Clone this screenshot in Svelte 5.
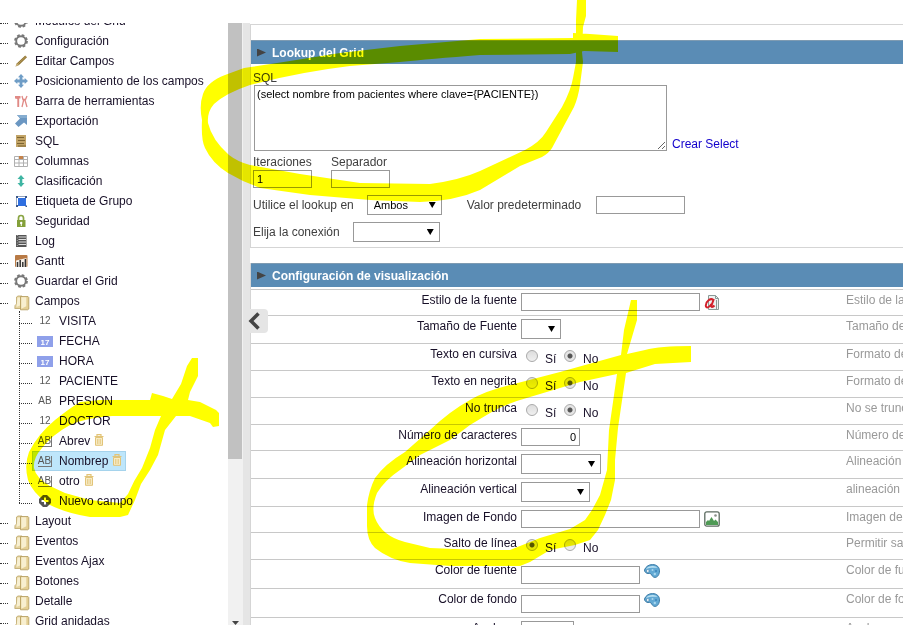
<script>
  const tools = [
    ['Módulos del Grid', 'gear'],
    ['Configuración', 'gear'],
    ['Editar Campos', 'pencil'],
    ['Posicionamiento de los campos', 'move'],
    ['Barra de herramientas', 'tools'],
    ['Exportación', 'export'],
    ['SQL', 'scroll'],
    ['Columnas', 'columns'],
    ['Clasificación', 'sort'],
    ['Etiqueta de Grupo', 'group'],
    ['Seguridad', 'lock'],
    ['Log', 'log'],
    ['Gantt', 'gantt'],
    ['Guardar el Grid', 'gear'],
  ];

  const fields = [
    { name: 'VISITA', kind: 'num' },
    { name: 'FECHA', kind: 'date' },
    { name: 'HORA', kind: 'date' },
    { name: 'PACIENTE', kind: 'num' },
    { name: 'PRESION', kind: 'text' },
    { name: 'DOCTOR', kind: 'num' },
    { name: 'Abrev', kind: 'virtual' },
    { name: 'Nombrep', kind: 'virtual', selected: true },
    { name: 'otro', kind: 'virtual' },
    { name: 'Nuevo campo', kind: 'add' },
  ];

  const folders = ['Layout', 'Eventos', 'Eventos Ajax', 'Botones', 'Detalle', 'Grid anidadas'];

  const settings = [
    { id: 'estilo', label: 'Estilo de la fuente', type: 'text', size: 'wide', icon: 'font', help: 'Estilo de la fuente' },
    { id: 'tamano', label: 'Tamaño de Fuente', type: 'select', size: 's40', help: 'Tamaño de la fuente' },
    { id: 'cursiva', label: 'Texto en cursiva', type: 'radio', value: 'no', help: 'Formato del texto' },
    { id: 'negrita', label: 'Texto en negrita', type: 'radio', value: 'no', help: 'Formato del texto' },
    { id: 'trunca', label: 'No trunca', type: 'radio', value: 'no', help: 'No se trunca el texto' },
    { id: 'caracteres', label: 'Número de caracteres', type: 'text', size: 'number', value: '0', help: 'Número de caracteres' },
    { id: 'horizontal', label: 'Alineación horizontal', type: 'select', size: 's80', help: 'Alineación horizontal' },
    { id: 'vertical', label: 'Alineación vertical', type: 'select', size: 's69', help: 'alineación vertical' },
    { id: 'imagen', label: 'Imagen de Fondo', type: 'text', size: 'wide', icon: 'image', help: 'Imagen de fondo' },
    { id: 'salto', label: 'Salto de línea', type: 'radio', value: 'si', help: 'Permitir salto de línea' },
    { id: 'cfuente', label: 'Color de fuente', type: 'text', size: 'color', icon: 'palette', help: 'Color de fuente' },
    { id: 'cfondo', label: 'Color de fondo', type: 'text', size: 'color', icon: 'palette', help: 'Color de fondo' },
    { id: 'anchura', label: 'Anchura', type: 'text', size: 'short', help: 'Anchura' },
  ];
</script>

{#snippet icon(kind)}
  <svg class="icon" viewBox="0 0 14 14" width="14" height="14" aria-hidden="true">
    {#if kind === 'gear'}
      <circle cx="7" cy="7" r="6" fill="none" stroke="#777" stroke-width="1.800" stroke-dasharray="2.700 2.010" />
      <circle cx="7" cy="7" r="4.800" fill="none" stroke="#777" stroke-width="1.900" />
    {:else if kind === 'pencil'}
      <path d="M1.500 12.500L3 9.200 11.200 1.500l1.800 1.800L5 11z" fill="#8f7433" />
      <path d="M4 10l8-7.500" stroke="#b99c58" stroke-width="1" />
      <path d="M1.500 12.500L3 9.200 5 11z" fill="#c9b27c" />
    {:else if kind === 'move'}
      <path d="M7 0l3 3.300H8.400v2.300h2.300V4L14 7l-3.300 3V8.400H8.400v2.300H10L7 14l-3-3.300h1.600V8.400H3.300V10L0 7l3.300-3v1.600h2.300V3.300H4z" fill="#6f9dc6" />
    {:else if kind === 'tools'}
      <path d="M1 2h5.500v2.500H5.200V13H3.300V5L1 4.500z" fill="#e08a86" />
      <path d="M8 2l1 3.500h2.500L13 2M9.800 5.500L8 13M10.800 5.500L13 13" fill="none" stroke="#e08a86" stroke-width="1.300" />
    {:else if kind === 'export'}
      <path d="M3 1h10v10l-3-2.500L4.500 13 1 9.500 6 4.500z" fill="#6b97c2" />
      <path d="M3 1h10v3H6z" fill="#86add0" />
    {:else if kind === 'scroll'}
      <path d="M2 1h10v12H2z" fill="#c2a467" />
      <path d="M3 3.500h7M4 6.500h7M3 9.500h7M4 12h8" stroke="#7d6430" stroke-width="1" />
    {:else if kind === 'columns'}
      <path d="M.5 2.500h13v10H.5zM.5 5.500h13M.5 9h13M5 2.500v10M9.500 2.500v10" fill="#fff" stroke="#b0b0b0" />
      <path d="M5 2h4v3H5z" fill="#c5824a" />
    {:else if kind === 'sort'}
      <path d="M7 1l3.500 4H8.300v4h2.200L7 13 3.500 9h2.200V5H3.500z" fill="#3fb5a3" />
    {:else if kind === 'group'}
      <path d="M2.500 2.500h9v9h-9z" fill="#fff" stroke="#93a3bd" />
      <path d="M4 4h8v8H4z" fill="#2f6fe0" />
      <path d="M2 11h2v2H2zM11.500 11.500h1.500v1.500h-1.500zM11 2h2v2h-2zM2 2h2v2H2z" fill="#3c5788" />
    {:else if kind === 'lock'}
      <path d="M4.500 6.500V4a2.500 2.500 0 015 0v2.500" fill="none" stroke="#8aa544" stroke-width="1.700" />
      <path d="M3 6h8.500v7H3z" fill="#84a03a" />
      <circle cx="7.200" cy="9" r="1.200" fill="#fff" />
      <path d="M6.800 9h1v3h-1z" fill="#fff" />
    {:else if kind === 'log'}
      <path d="M2 1h10.500v12H2z" fill="#555" />
      <path d="M4.500 3H12M4.500 5.500H12M4.500 8H12M4.500 10.500H12" stroke="#ddd" stroke-width="1.200" />
      <path d="M3.300 1v12" stroke="#aaa" stroke-dasharray="1 1.500" />
    {:else if kind === 'gantt'}
      <rect x="1" y="1" width="12.500" height="12" rx="1" fill="#b87a45" />
      <path d="M2 6.500l10.500-2.500V13H2z" fill="#f5efe8" />
      <path d="M3.500 8v5M6.200 6v7M8.800 8v5M11.400 5v8" stroke="#333" stroke-width="1.500" />
    {/if}
  </svg>
{/snippet}

{#snippet folder()}
  <svg class="icon folder" viewBox="0 0 16 16" width="16" height="16" aria-hidden="true">
    <path d="M2.500 2L4 1h4v12.500H.8l.2-3 1.500-1.500z" fill="#e6d4a0" stroke="#bda66a" stroke-width=".8" />
    <path d="M3.500 2.500h2.500v8L2.500 12z" fill="#f8f0d2" />
    <path d="M6.500 1.500h7.500l.8 1v11.500l-1 .8H6.500z" fill="#e4cf94" stroke="#b39a5c" stroke-width=".8" />
    <path d="M7.300 2.300h5v9l-5 2.500z" fill="#f8efd0" />
  </svg>
{/snippet}

{#snippet trash()}
  <svg class="trash" viewBox="0 0 10 12" width="10" height="12" aria-hidden="true">
    <path d="M.5 2.500h9M3 2V.7h4V2" stroke="#e2c478" stroke-width="1.200" fill="none" />
    <path d="M1.500 3.500h7v7.800h-7z" fill="#f7ebc5" stroke="#e2c478" />
    <path d="M3.800 5v5M6.200 5v5" stroke="#e2c478" />
  </svg>
{/snippet}

{#snippet side(kind)}
  {#if kind === 'font'}
    <svg viewBox="0 0 16 16" width="16" height="16" aria-hidden="true">
      <path d="M4.500 1.500h7l3 3v11h-10z" fill="#eef1f1" stroke="#8a9a96" />
      <path d="M11.500 1.500v3h3M12.500 6v9" stroke="#8a9a96" fill="none" />
      <path d="M9 5.500C6.500 4.200 2 7 1.800 11.500c0 3 3.200 2.500 5.700-1.500M9.800 5L7.500 11.500c-.5 1.800 1 2 3 0" fill="none" stroke="#d2202a" stroke-width="2" />
    </svg>
  {:else if kind === 'image'}
    <svg viewBox="0 0 16 16" width="16" height="16" aria-hidden="true">
      <rect x=".8" y=".8" width="14.400" height="14.400" rx="2" fill="#fff" stroke="#5c6b60" stroke-width="1.300" />
      <path d="M2 14v-3l2-2 1 1 2.500-4L10 10l1.500-1.500L14 11v3z" fill="#4f9a55" />
      <circle cx="11.500" cy="4.500" r="1.300" fill="#8a8f8a" />
    </svg>
  {:else}
    <svg viewBox="0 0 16 14" width="16" height="14" aria-hidden="true">
      <path d="M.5 6C1.500 3 4.500.5 8.500.6c4.500 0 7 2.700 7 6.200 0 3.800-2 6.600-4.500 6.600-2.300 0-3-2-4-3.400-1-1-1.500-.5-3-.5S.3 8 .5 6z" fill="#62a9d4" stroke="#3c7ba6" />
      <path d="M2 5C3 3 6 1.700 9 1.900c2 .1 3.500.8 4.300 2C10 3.500 5 3.500 2 5z" fill="#b9e0f2" />
      <circle cx="3.800" cy="7" r="1.400" fill="#fff" stroke="#3c7ba6" stroke-width=".6" />
      <circle cx="8.500" cy="6" r="1" fill="#a8d6ee" /><circle cx="12" cy="7" r="1" fill="#3d83b8" /><circle cx="10.800" cy="10" r="1.200" fill="#a8d6ee" />
    </svg>
  {/if}
{/snippet}

<div class="page">
  <nav class="sidebar" aria-label="Grid">
    <ul class="tree">
      {#each tools as [name, kind]}
        <li><a href="#tree"><span class="slot">{@render icon(kind)}</span>{name}</a></li>
      {/each}
      <li><a href="#tree"><span class="slot">{@render folder()}</span>Campos</a></li>
      <li class="branch">
        <ul>
          {#each fields as f}
            <li>
              <a href="#tree" class:selected={f.selected}>
                <span class="type">
                  {#if f.kind === 'num'}12
                  {:else if f.kind === 'date'}<span class="cal">17</span>
                  {:else if f.kind === 'text'}AB
                  {:else if f.kind === 'virtual'}<span class="virtual">AB</span>
                  {:else}
                    <svg viewBox="0 0 12 12" width="12" height="12" aria-hidden="true">
                      <path d="M4 0h4l4 4v4l-4 4H4L0 8V4z" fill="#555" />
                      <path d="M6 2.500v7M2.500 6h7" stroke="#fff" stroke-width="2" />
                    </svg>
                  {/if}
                </span>{f.name}{#if f.kind === 'virtual'}{@render trash()}{/if}
              </a>
            </li>
          {/each}
        </ul>
      </li>
      {#each folders as name}
        <li><a href="#tree"><span class="slot">{@render folder()}</span>{name}</a></li>
      {/each}
    </ul>
  </nav>
  <div class="scrollbar"><div class="thumb"></div><i></i></div>
  <div class="splitter">
    <button class="collapse" aria-label="Ocultar menú">
      <svg viewBox="0 0 12 18" width="12" height="18"><path d="M10.500 1.500L3 9l7.500 7.500" fill="none" stroke="#444" stroke-width="3.500" /></svg>
    </button>
  </div>

  <main>
    <section class="lookup">
      <h2>Lookup del Grid</h2>
      <div class="body">
        <label for="sql">SQL</label>
        <div class="line sql">
          <textarea id="sql" value={'(select nombre from pacientes where clave={PACIENTE})'}></textarea>
          <a href="#select">Crear Select</a>
        </div>
        <div class="line pair">
          <div><label for="iter">Iteraciones</label><input id="iter" value="1" /></div>
          <div><label for="sep">Separador</label><input id="sep" /></div>
        </div>
        <div class="line">
          <label for="use">Utilice el lookup en</label>
          <span class="select s75"><select id="use"><option>Ambos</option></select></span>
          <label for="def" class="default">Valor predeterminado</label>
          <input id="def" class="defval" />
        </div>
        <div class="line">
          <label for="con">Elija la conexión</label>
          <span class="select s87"><select id="con"><option></option></select></span>
        </div>
      </div>
    </section>

    <section class="display">
      <h2>Configuración de visualización</h2>
      <div class="rows">
        {#each settings as s}
          <div class="row">
            {#if s.type === 'radio'}
              <span class="name" id="{s.id}-l">{s.label}</span>
              <div class="control radios" role="radiogroup" aria-labelledby="{s.id}-l">
                <input type="radio" name={s.id} id="{s.id}-s" checked={s.value === 'si'} /><label for="{s.id}-s">Sí</label>
                <input type="radio" name={s.id} id="{s.id}-n" checked={s.value === 'no'} /><label for="{s.id}-n">No</label>
              </div>
            {:else}
              <label class="name" for={s.id}>{s.label}</label>
              <div class="control {s.size}">
                {#if s.type === 'select'}
                  <span class="select {s.size}"><select id={s.id}><option></option></select></span>
                {:else}
                  <input id={s.id} value={s.value ?? ''} />
                {/if}
                {#if s.icon}<button class="pick" aria-label="Elegir">{@render side(s.icon)}</button>{/if}
              </div>
            {/if}
            <span class="help">{s.help}</span>
          </div>
        {/each}
      </div>
    </section>
  </main>

  <svg class="marker" width="903" height="625" viewBox="0 0 903 625" aria-hidden="true">
    <path d="M618 36V52L584 51 570 54 480 55Q430 59 400 62L350 66Q300 72 250 85 226 93 214 104 207 112 208 123 212 140 229 155 238 162 250 165L300 174 360 183 430 184Q460 180 480 171L525 150Q540 142 546 132L562 107Q571 90 573 78L576 62V20L577 0H586V16L583 27 582 52 583 62 580 85Q578 98 574 107L552 148Q549 153 542 157L520 166 480 190Q455 201 420 202L370 200 310 195 260 188 243 181 228 173Q212 163 205 148 201 140 202 120 199 105 203 94 207 82 225 75L244 68 290 61 340 53 400 46 480 39 573 38V33L590 34Z" />
    <path fill-rule="evenodd" d="M198 358V376L190 392 188 400 200 402 216 410 219 413V426L213 427 210 423 190 416H176L165 430 158 455 150 470 141 484 135 500 128 515 120 517H90Q65 513 48 504 32 492 28 480 24 465 29 452 38 434 55 420 70 408 80 402L100 400H150L152 393 163 396 172 399 181 384 187 366 192 358ZM161 416H112Q85 418 70 425 52 435 42 448 33 458 34 468 36 478 50 486L65 493 90 500 120 503 128 494Q134 480 142 468L150 448 155 430Z" />
    <path fill-rule="evenodd" d="M631 300H637V320L627 354 645 350Q660 346 691 346V362L655 364 626 373 618 428 615 460V480L611 500 605 515 598 530 590 540 575 545 550 550 530 562 520 566H450L410 563Q390 560 375 548 367 540 367 526V505Q369 490 375 478 385 464 405 452L430 430Q450 411 470 400 485 391 510 385L560 372 621 355 624 330ZM617 374L580 382 530 397Q505 404 490 413L470 425 450 440 420 455 400 470Q385 480 377 493 371 508 375 518 382 536 405 542L430 548 480 550H510L540 538 570 529 585 520 592 510 600 495 607 470 609 430Z" />
  </svg>
</div>

<style>
  :global(body) {
    margin: 0;
    background: #fff;
  }
  .page {
    position: relative;
    isolation: isolate;
    display: flex;
    box-sizing: border-box;
    height: 100vh;
    padding-top: 23px;
    overflow: hidden;
    background: #fff;
    font: 12px/14px "Liberation Sans", Arial, sans-serif;
    color: #181028;
  }
  .marker {
    position: absolute;
    inset: 0 auto auto 0;
    pointer-events: none;
    mix-blend-mode: multiply;
    fill: #ff0;
  }

  .sidebar {
    flex: 0 0 228px;
    overflow: hidden;
  }
  ul {
    list-style: none;
    margin: 0;
    padding: 0;
  }
  .tree {
    margin-top: -12px;
  }
  .tree li {
    display: flex;
    white-space: nowrap;
  }
  .tree li:not(.branch)::before {
    content: '';
    width: 8px;
    height: 12px;
    border-bottom: 1px dotted #333;
  }
  .tree a {
    display: flex;
    align-items: center;
    height: 20px;
    color: inherit;
    text-decoration: none;
  }
  .slot {
    display: flex;
    justify-content: center;
    width: 26px;
    margin-right: 1px;
  }
  .folder {
    margin: 3px 0 0 2px;
  }
  .tree .branch {
    position: relative;
    padding-left: 19px;
  }
  .branch::after {
    content: '';
    position: absolute;
    left: 19px;
    top: 0;
    bottom: 8px;
    border-left: 1px dotted #333;
  }
  .tree .branch li::before {
    width: 13px;
  }
  .branch a {
    box-sizing: border-box;
    border: 1px solid transparent;
    padding-right: 3px;
  }
  .branch .selected {
    background: #bee6fb;
    border-color: #a5d3ec;
  }
  .type {
    display: flex;
    justify-content: center;
    width: 24px;
    margin-right: 2px;
    font-size: 10px;
    color: #555;
  }
  .cal {
    width: 16px;
    height: 9px;
    border-top: 2px dotted #8fa0ea;
    background: #8fa0ea;
    color: #fff;
    font: bold 8px/9px "Liberation Sans", Arial, sans-serif;
    text-align: center;
  }
  .virtual {
    height: 10px;
    line-height: 10px;
    border: solid #777;
    border-width: 0 1px 1px 0;
  }
  .trash {
    margin-left: 4px;
    margin-top: -2px;
  }

  .scrollbar {
    display: flex;
    flex-direction: column;
    justify-content: space-between;
    flex: 0 0 15px;
    background: #f1f1f1;
  }
  .thumb {
    height: 72.500%;
    margin-right: 1px;
    background: #c1c1c1;
  }
  .scrollbar i {
    margin: 0 0 0 4px;
    width: 7px;
    height: 4px;
    background: #444;
    clip-path: polygon(0 0, 100% 0, 50% 100%);
  }
  .splitter {
    position: relative;
    flex: 0 0 7px;
    background: #e5e5e5;
  }
  .collapse {
    position: absolute;
    z-index: 1;
    left: 0;
    top: 286px;
    display: flex;
    align-items: center;
    padding: 0 0 0 5px;
    width: 25px;
    height: 24px;
    border: 0;
    border-radius: 0 4px 4px 0;
    background: #e5e5e5;
  }

  main {
    flex: 1;
    min-width: 0;
    overflow: hidden;
  }
  section {
    border-left: 1px solid #d5d5d5;
  }
  h2 {
    display: flex;
    align-items: center;
    margin: 0;
    height: 24px;
    padding-left: 6px;
    background: #5a8cb5;
    border-top: 1px solid #7e9bb2;
    box-sizing: border-box;
    color: #fff;
    font-size: 12px;
    line-height: 14px;
  }
  h2::before {
    content: '';
    width: 9px;
    height: 8px;
    margin-right: 6px;
    background: #444;
    clip-path: polygon(0 0, 100% 50%, 0 100%);
  }
  .lookup {
    margin-top: 1px;
    padding-top: 15px;
    border-top: 1px solid #d5d5d5;
    border-bottom: 1px solid #d5d5d5;
    margin-bottom: 15px;
    color: #404040;
  }
  .body {
    padding: 7px 2px 5px;
  }
  .body label {
    display: block;
  }
  .line {
    display: flex;
    align-items: center;
    margin-bottom: 7px;
  }
  .line:last-child {
    margin-bottom: 0;
  }
  .sql {
    align-items: flex-end;
    gap: 5px;
    margin-bottom: 4px;
  }
  .sql a {
    color: #1200cc;
    text-decoration: none;
  }
  .pair {
    gap: 19px;
  }
  input, textarea, select {
    box-sizing: border-box;
    margin: 0;
    border: 1px solid #999;
    border-radius: 0;
    background: #fff;
    color: #000;
    font: 11px/14px "Liberation Sans", Arial, sans-serif;
  }
  input {
    width: 59px;
    height: 18px;
    padding: 0 3px;
  }
  textarea {
    width: 413px;
    height: 66px;
    margin-left: 1px;
    padding: 1px 2px;
  }
  .pair input {
    display: block;
    margin-top: 1px;
  }
  .select {
    position: relative;
    display: block;
    margin-left: 13px;
  }
  .select::after {
    content: '';
    position: absolute;
    right: 6px;
    top: 7px;
    width: 7px;
    height: 6px;
    background: #000;
    clip-path: polygon(0 0, 100% 0, 50% 100%);
    pointer-events: none;
  }
  select {
    display: block;
    width: 100%;
    height: 20px;
    padding: 0 6px;
    appearance: none;
  }
  .s40 { width: 40px; }
  .s69 { width: 69px; }
  .s75 { width: 75px; }
  .s80 { width: 80px; }
  .s87 { width: 87px; }
  .default {
    margin-left: 25px;
  }
  .defval {
    width: 89px;
    margin-left: 15px;
  }

  .rows {
    margin-top: 2px;
    border-top: 1px solid #c8c8c8;
  }
  .row {
    display: grid;
    grid-template-columns: 266px minmax(0, 1fr) 57px;
    border-bottom: 1px solid #c8c8c8;
    white-space: nowrap;
  }
  .name {
    padding-top: 3px;
    text-align: right;
  }
  .help {
    padding-top: 3px;
    color: #999;
  }
  .control {
    display: flex;
    align-items: center;
    gap: 4px;
    width: auto;
    padding: 3px 4px 4px;
  }
  .control .select {
    margin: 0;
  }
  .wide input { width: 179px; }
  .short input { width: 53px; }
  .number input { text-align: right; }
  .color input { width: 119px; }
  .color {
    align-items: flex-start;
    padding-top: 6px;
  }
  .color .pick {
    margin-top: -2px;
  }
  .pick {
    display: flex;
    height: 16px;
    padding: 0;
    border: 0;
    background: none;
  }
  .radios {
    gap: 0;
    padding: 5px 9px 7px;
  }
  .radios label {
    width: 19px;
    padding-top: 3px;
    margin-bottom: -3px;
    margin-left: 7px;
  }
  .radios input {
    appearance: none;
    width: 12px;
    height: 12px;
    padding: 0;
    border-color: #aaa;
    border-radius: 50%;
    background: linear-gradient(#ddd, #f0f0f0);
  }
  .radios input:checked {
    background: radial-gradient(circle, #555 0 2px, #e5e5e5 3px);
  }
</style>
